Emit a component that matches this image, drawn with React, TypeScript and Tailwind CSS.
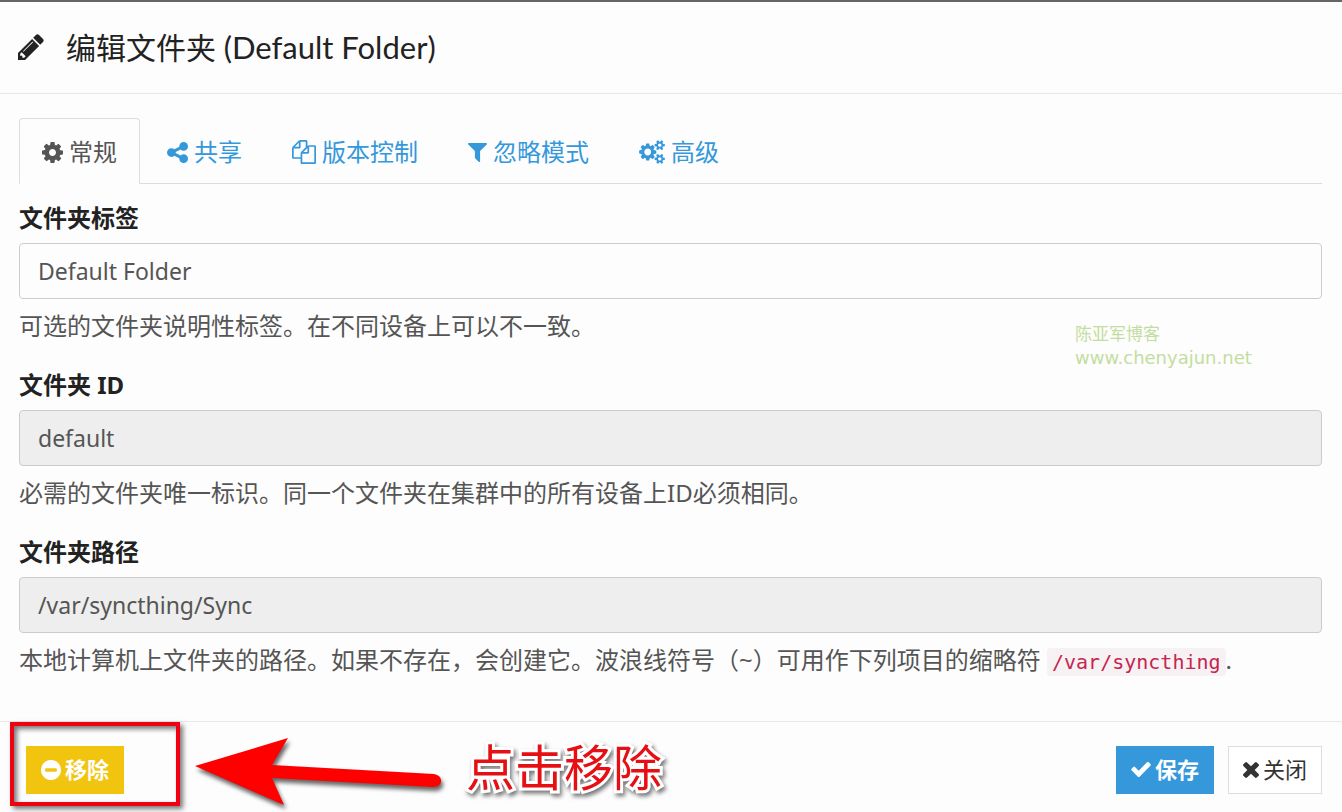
import { useState } from 'react';
import type { ReactNode } from 'react';

type IconProps = { d: string; viewBox: string; className: string };

function Icon({ d, viewBox, className }: IconProps) {
  return (
    <svg className={`shrink-0 ${className}`} viewBox={viewBox} fill="currentColor" aria-hidden="true">
      <path d={d} />
    </svg>
  );
}

const icons = {
  pencil:
    'M491 1536l91-91-235-235-91 91v107h128v128h107zm523-928q0-22-22-22-10 0-17 7l-542 542q-7 7-7 17 0 22 22 22 10 0 17-7l542-542q7-7 7-17zm-54-192l416 416-832 832h-416v-416zm683 96q0 53-37 90l-166 166-416-416 166-165q36-38 90-38 53 0 91 38l235 234q37 39 37 91z',
  cog: 'M1152 896q0-106-75-181t-181-75-181 75-75 181 75 181 181 75 181-75 75-181zm512-109v222q0 12-8 23t-20 13l-185 28q-19 54-39 91 35 50 107 138 10 12 10 25t-9 23q-27 37-99 108t-94 71q-12 0-26-9l-138-108q-44 23-91 38-16 136-29 186-7 28-36 28h-222q-14 0-24.5-8.5t-11.5-21.5l-28-184q-49-16-90-37l-141 107q-10 9-25 9-14 0-25-11-126-114-165-168-7-10-7-23 0-12 8-23 15-21 51-66.5t54-70.5q-27-50-41-99l-183-27q-13-2-21-12.5t-8-23.5v-222q0-12 8-23t19-13l186-28q14-46 39-92-40-57-107-138-10-12-10-24 0-10 9-23 26-36 98.5-107.5t94.5-71.5q13 0 26 10l138 107q44-23 91-38 16-136 29-186 7-28 36-28h222q14 0 24.5 8.5t11.5 21.5l28 184q49 16 90 37l142-107q9-9 24-9 13 0 25 10 129 119 165 170 7 8 7 22 0 12-8 23-15 21-51 66.5t-54 70.5q26 50 41 98l183 28q13 2 21 12.5t8 23.5z',
  share:
    'M1344 1024q133 0 226.5 93.5t93.5 226.5-93.5 226.5-226.5 93.5-226.5-93.5-93.5-226.5q0-12 2-34l-360-180q-92 86-218 86-133 0-226.5-93.5t-93.5-226.5 93.5-226.5 226.5-93.5q126 0 218 86l360-180q-2-22-2-34 0-133 93.5-226.5t226.5-93.5 226.5 93.5 93.5 226.5-93.5 226.5-226.5 93.5q-126 0-218-86l-360 180q2 22 2 34t-2 34l360 180q92-86 218-86z',
  files:
    'M1696 384q40 0 68 28t28 68v1216q0 40-28 68t-68 28h-960q-40 0-68-28t-28-68v-288h-544q-40 0-68-28t-28-68v-672q0-40 20-88t48-76l408-408q28-28 76-48t88-20h416q40 0 68 28t28 68v328q68-40 128-40h416zm-544 213l-299 299h299v-299zm-640-384l-299 299h299v-299zm196 647l316-316v-416h-384v416q0 40-28 68t-68 28h-416v640h512v-256q0-40 20-88t48-76zm956 804v-1152h-384v416q0 40-28 68t-68 28h-416v640h896z',
  filter:
    'M1595 295q17 41-14 70l-493 493v742q0 42-39 59-13 5-25 5-27 0-45-19l-256-256q-19-19-19-45v-486l-493-493q-31-29-14-70 17-39 59-39h1280q42 0 59 39z',
  cogs: 'M896 896q0-106-75-181t-181-75-181 75-75 181 75 181 181 75 181-75 75-181zm768 512q0-52-38-90t-90-38-90 38-38 90q0 53 37.5 90.5t90.5 37.5 90.5-37.5 37.5-90.5zm0-1024q0-52-38-90t-90-38-90 38-38 90q0 53 37.5 90.5t90.5 37.5 90.5-37.5 37.5-90.5zm-384 421v185q0 10-7 19.5t-16 10.5l-155 24q-11 35-32 76 34 48 90 115 7 10 7 20 0 12-7 19-23 30-82.5 89.5t-78.5 59.5q-11 0-21-7l-115-90q-37 19-77 31-11 108-23 155-7 24-30 24h-186q-11 0-20-7.5t-10-17.5l-23-153q-34-10-75-31l-118 89q-7 7-20 7-11 0-21-8-144-133-144-160 0-9 7-19 10-14 41-53t47-61q-23-44-35-82l-152-24q-10-1-17-9.5t-7-19.5v-185q0-10 7-19.5t16-10.5l155-24q11-35 32-76-34-48-90-115-7-11-7-20 0-12 7-20 22-30 82-89t79-59q11 0 21 7l115 90q34-18 77-32 11-108 23-154 7-24 30-24h186q11 0 20 7.5t10 17.5l23 153q34 10 75 31l118-89q8-7 20-7 11 0 21 8 144 133 144 160 0 9-7 19-12 16-42 54t-45 60q23 48 34 82l152 23q10 2 17 10.5t7 19.5zm640 533v140q0 16-149 31-12 27-30 52 51 113 51 138 0 4-4 7-122 71-124 71-8 0-46-47t-52-68q-20 2-30 2t-30-2q-14 21-52 68t-46 47q-2 0-124-71-4-3-4-7 0-25 51-138-18-25-30-52-149-15-149-31v-140q0-16 149-31 13-29 30-52-51-113-51-138 0-4 4-7 4-2 35-20t59-34 30-16q8 0 46 46.5t52 67.5q20-2 30-2t30 2q51-71 92-112l6-2q4 0 124 70 4 3 4 7 0 25-51 138 17 23 30 52 149 15 149 31zm0-1024v140q0 16-149 31-12 27-30 52 51 113 51 138 0 4-4 7-122 71-124 71-8 0-46-47t-52-68q-20 2-30 2t-30-2q-14 21-52 68t-46 47q-2 0-124-71-4-3-4-7 0-25 51-138-18-25-30-52-149-15-149-31v-140q0-16 149-31 13-29 30-52-51-113-51-138 0-4 4-7 4-2 35-20t59-34 30-16q8 0 46 46.5t52 67.5q20-2 30-2t30 2q51-71 92-112l6-2q4 0 124 70 4 3 4 7 0 25-51 138 17 23 30 52 149 15 149 31z',
  minus:
    'M1344 960v-128q0-26-19-45t-45-19h-768q-26 0-45 19t-19 45v128q0 26 19 45t45 19h768q26 0 45-19t19-45zm320-64q0 209-103 385.5t-279.5 279.5-385.5 103-385.5-103-279.5-279.5-103-385.5 103-385.5 279.5-279.5 385.5-103 385.5 103 279.5 279.5 103 385.5z',
  check:
    'M1671 566q0 40-28 68l-724 724-136 136q-28 28-68 28t-68-28l-136-136-362-362q-28-28-28-68t28-68l136-136q28-28 68-28t68 28l294 295 656-657q28-28 68-28t68 28l136 136q28 28 28 68z',
  times:
    'M1490 1322q0 40-28 68l-136 136q-28 28-68 28t-68-28l-294-294-294 294q-28 28-68 28t-68-28l-136-136q-28-28-28-68t28-68l294-294-294-294q-28-28-28-68t28-68l136-136q28-28 68-28t68 28l294 294 294-294q28-28 68-28t68 28l136 136q28 28 28 68t-28 68l-294 294 294 294q28 28 28 68z',
};

const tabs = [
  { id: 'general', label: '常规', d: icons.cog, viewBox: '128 128 1536 1536', size: 'w-[21px] h-[21px]' },
  { id: 'sharing', label: '共享', d: icons.share, viewBox: '128 128 1536 1536', size: 'w-[21px] h-[21px]' },
  { id: 'versioning', label: '版本控制', d: icons.files, viewBox: '0 0 1792 1792', size: 'w-6 h-6' },
  { id: 'ignores', label: '忽略模式', d: icons.filter, viewBox: '192 256 1408 1408', size: 'w-[19px] h-[19px]' },
  { id: 'advanced', label: '高级', d: icons.cogs, viewBox: '0 0 1920 1792', size: 'w-[26px] h-6' },
];

type FieldProps = { id: string; label: string; value: string; readOnly?: boolean; children: ReactNode };

function Field({ id, label, value, readOnly, children }: FieldProps) {
  return (
    <div className="mb-[25px]">
      <label htmlFor={id} className="block mb-2 text-2xl leading-[34px] font-bold text-[#222]">
        {label}
      </label>
      <input
        id={id}
        type="text"
        defaultValue={value}
        readOnly={readOnly}
        className="block w-full h-14 px-[18px] border border-[#ccc] rounded-[4px] bg-[#fdfdfd] text-[23px] text-[#555] read-only:bg-[#eee]"
      />
      <p className="mt-[10px] text-2xl leading-[34px] text-[#555]">{children}</p>
    </div>
  );
}

export default function App() {
  const [activeTab, setActiveTab] = useState('general');

  return (
    <div className="relative min-h-screen bg-[#fdfdfd] border-t-2 border-[#666] font-['Noto_Sans','Noto_Sans_CJK_SC',sans-serif]">
      {/* Header */}
      <header className="flex items-center gap-[22px] h-[92px] px-[18px] pb-[2px] border-b border-[#e8e8e8] text-[#222]">
        <Icon d={icons.pencil} viewBox="128 128 1536 1536" className="w-[26px] h-[26px]" />
        <h4 className="text-[30px] leading-10 font-['Lato','Noto_Sans_CJK_SC',sans-serif]">
          编辑文件夹 <span className="text-[31px]">(Default Folder)</span>
        </h4>
      </header>

      <main className="px-5 pt-6 pl-[19px]">
        {/* Tabs */}
        <nav className="flex gap-1 mb-[17px] border-b border-[#ddd]">
          {tabs.map((tab) => (
            <button
              key={tab.id}
              type="button"
              onClick={() => setActiveTab(tab.id)}
              className={`flex items-center gap-[6px] h-[66px] -mb-px px-[22px] pt-[2px] border text-2xl leading-[34px] rounded-t-[4px] ${
                activeTab === tab.id
                  ? 'border-[#ddd] border-b-[#fdfdfd] bg-[#fdfdfd] text-[#555]'
                  : 'border-transparent text-[#3498db]'
              }`}
            >
              <Icon d={tab.d} viewBox={tab.viewBox} className={tab.size} />
              {tab.label}
            </button>
          ))}
        </nav>

        <form>
          <Field id="folderLabel" label="文件夹标签" value="Default Folder">
            可选的文件夹说明性标签。在不同设备上可以不一致。
          </Field>
          <Field id="folderID" label="文件夹 ID" value="default" readOnly>
            必需的文件夹唯一标识。同一个文件夹在集群中的所有设备上ID必须相同。
          </Field>
          <Field id="folderPath" label="文件夹路径" value="/var/syncthing/Sync" readOnly>
            本地计算机上文件夹的路径。如果不存在，会创建它。波浪线符号（~）可用作下列项目的缩略符{' '}
            <code className="px-[5px] py-[2px] rounded-[4px] bg-[#f6f2f4] text-xl text-[#c7254e] font-['DejaVu_Sans_Mono',monospace]">
              /var/syncthing
            </code>
            .
          </Field>
        </form>
      </main>

      {/* Footer */}
      <footer className="relative flex items-center gap-[14px] mt-11 h-[90px] pt-[6px] pl-[26px] pr-5 border-t border-[#e8e8e8] text-[22px]">
        <button type="button" className="flex items-center gap-1 h-12 mr-auto px-[15px] bg-[#f1c40f] text-white font-bold">
          <Icon d={icons.minus} viewBox="128 128 1536 1536" className="w-5 h-5" />
          移除
        </button>
        <button type="button" className="flex items-center gap-1 h-12 px-[15px] bg-[#3498db] text-white font-bold">
          <Icon d={icons.check} viewBox="121 334 1550 1188" className="w-5 h-[15px]" />
          保存
        </button>
        <button type="button" className="flex items-center gap-1 h-12 px-[14px] border border-[#ddd] bg-white text-[#333]">
          <Icon d={icons.times} viewBox="302 366 1188 1188" className="w-4 h-4" />
          关闭
        </button>

        {/* Callout over the remove button */}
        <div className="absolute left-[10px] top-0 w-[170px] h-[84px] border-4 border-[#f00010] shadow-[3px_3px_5px_#0008,inset_3px_3px_5px_#0008] pointer-events-none" />
        <svg className="absolute left-[190px] top-3 w-[260px] h-[76px] overflow-visible drop-shadow-[2px_4px_2px_#0009] pointer-events-none" viewBox="190 734 260 76" aria-hidden="true">
          <path d="M195 766L288 738L272 765L434 774Q442 776 441 782Q440 787 432 787L272 778L284 805Z" fill="#ff0000" />
        </svg>
        <span className="absolute left-[466px] top-[10px] text-[49px] leading-[70px] text-[#e60f14] [-webkit-text-stroke:6px_white] [paint-order:stroke_fill] drop-shadow-[2px_3px_2px_#0008] pointer-events-none">
          点击移除
        </span>
      </footer>

      {/* Site watermark */}
      <div className="absolute top-5/13 right-[90px] w-[177px] mt-2 text-[17px] leading-6 text-[#c3dda0] font-['DejaVu_Sans','Noto_Sans_CJK_SC',sans-serif] pointer-events-none">
        <p>陈亚军博客</p>
        <p className="text-lg leading-6">www.chenyajun.net</p>
      </div>
    </div>
  );
}
